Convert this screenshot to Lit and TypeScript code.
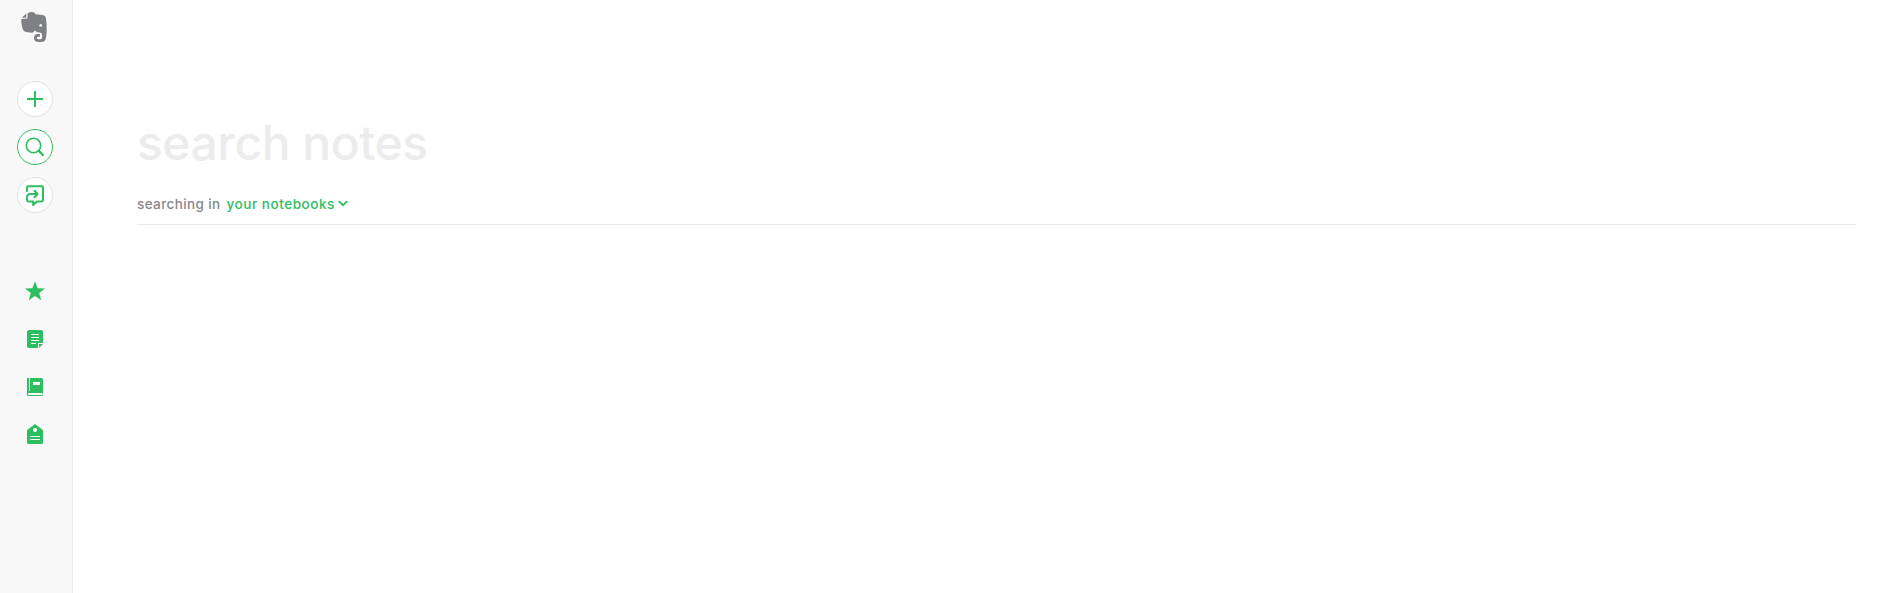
import { LitElement, html, css, svg } from "lit";
import { customElement } from "lit/decorators.js";

const plus = svg`<path d="M18 10v16M10 18h16" fill="none" stroke="#2dbe60" stroke-width="2"/>`;
const magnifier = svg`<circle cx="16.5" cy="16.5" r="7.2" fill="none" stroke="#2dbe60" stroke-width="1.6"/><path d="M21.5 21.5L26.6 26.6" fill="none" stroke="#2dbe60" stroke-width="2.2"/>`;
const share = svg`<g fill="none" stroke="#2dbe60" stroke-width="2" stroke-linejoin="round"><path d="M10 14.8V10.6Q10 9.2 11.4 9.2H24.6Q26 9.2 26 10.6V23.1Q26 24.5 24.6 24.5H19.9L16.2 28V24.5H11.4Q10 24.5 10 23.1V20.5Q10 17 13.5 17H19.5"/><path d="M17 13.2L20.6 17L17 20.8"/></g>`;
const star = svg`<path d="M18 8.2L20.6 15.2L28 15.5L22.2 20.1L24.2 27.2L18 23.1L11.8 27.2L13.8 20.1L8 15.5L15.4 15.2Z" fill="#2dbe60"/>`;
const note = svg`<path d="M12 9H24Q26 9 26 11V22H21V27H12Q10 27 10 25V11Q10 9 12 9Z" fill="#2dbe60"/><path d="M22 23H26L22 27Z" fill="#2dbe60"/><path d="M14 13.5H22M14 16.5H22M14 19.5H22M14 22.5H19" stroke="#fff" stroke-width="1"/>`;
const book = svg`<path d="M10 9H24.5Q26 9 26 10.5V25.5Q26 27 24.5 27H11.5Q10 27 10 25.5Z" fill="#2dbe60"/><path d="M12 9H13V22H12ZM16 13H23V16H16ZM11.5 24H25.5V26H11.5Q10.9 25.6 10.9 25T11.5 24Z" fill="#fff"/>`;
const tag = svg`<path d="M18 7L25.2 12.4Q26 13.1 26 14V25.6Q26 27 24.6 27H11.4Q10 27 10 25.6V14Q10 13.1 10.8 12.4Z" fill="#2dbe60"/><circle cx="18" cy="13" r="2" fill="#fff"/><path d="M13 19.5H23M13 22.5H23" stroke="#fff" stroke-width="1"/>`;

@customElement("app-root")
export class AppRoot extends LitElement {
  static styles = css`
    :host {
      display: flex;
      height: 100vh;
      overflow: hidden;
      background: #fff;
      font-family: Inter, "Liberation Sans", sans-serif;
    }
    svg { display: block; }
    .sidebar {
      box-sizing: border-box;
      flex: none;
      width: 73px;
      padding: 10px 0 0 17px;
      background: #f8f8f8;
      border-right: 1px solid #ececec;
    }
    .logo { margin-bottom: 37px; }
    .actions, .links { display: flex; flex-direction: column; gap: 12px; }
    .links { margin-top: 60px; }
    .item { box-sizing: border-box; width: 36px; height: 36px; }
    .main { flex: 1; padding: 114px 37px 0 64px; }
    .title {
      height: 58px;
      line-height: 58px;
      font-size: 48px;
      font-weight: 500;
      letter-spacing: -0.5px;
      color: #ececec;
      white-space: nowrap;
    }
    .scope {
      display: flex;
      align-items: center;
      height: 20px;
      margin-top: 22px;
      padding-bottom: 10px;
      border-bottom: 1px solid #e8e8e8;
      font-size: 13.5px;
      line-height: 20px;
      font-weight: 500;
      letter-spacing: 0.38px;
      white-space: nowrap;
    }
    .label { width: 89.5px; color: #878787; }
    .choice { width: 111px; color: #2dbe60; letter-spacing: 0.54px; }
  `;

  private round(icon: unknown, active = false) {
    return html`<div class="item"><svg width="36" height="36" viewBox="0 0 36 36">
      <circle cx="18" cy="18" r="17.5" fill="#fff" stroke=${active ? "#2dbe60" : "#e0e0e0"}></circle>${icon}</svg></div>`;
  }

  private plain(icon: unknown) {
    return html`<div class="item"><svg width="36" height="36" viewBox="0 0 36 36">${icon}</svg></div>`;
  }

  render() {
    return html`
      <nav class="sidebar">
        <svg class="logo" width="36" height="34" viewBox="0 0 36 34">
          <path fill="#7f8084" d="M10.5 4Q11 2 14.5 2Q17.8 2 18.6 4.2L25.5 5Q28.4 5.3 28.8 7.8Q29.8 13 29.7 19Q29.7 26 28.4 29.5Q27.6 32 24 32H21.5Q17 32 17 28Q17 24 21 24H23V26.8H21.2Q19.8 26.8 19.8 28Q19.8 29.3 21.5 29.3H23.3Q25.2 29.3 25.2 26.5Q25.2 22.6 22.5 22.6Q18.9 22.6 17.8 20.2Q17 22.9 14.5 22.8L9 22Q6.3 21.5 5.5 18.5Q4.2 13.7 4.2 10.2Q4.2 8.9 5.6 8.8H9Q10.5 8.8 10.5 7.3Z"/>
          <path fill="#7f8084" d="M9.3 3.4V7Q9.3 7.7 8.6 7.7H5Z"/>
          <path fill="#fff" d="M22.1 16.4Q22.3 14 23.8 14.1Q25.2 14.4 25.1 16.7Q23.5 16 22.1 16.4Z"/>
        </svg>
        <div class="actions">${this.round(plus)}${this.round(magnifier, true)}${this.round(share)}</div>
        <div class="links">${this.plain(star)}${this.plain(note)}${this.plain(book)}${this.plain(tag)}</div>
      </nav>
      <main class="main">
        <div class="title">search notes</div>
        <div class="scope">
          <span class="label">searching in</span>
          <span class="choice">your notebooks</span>
          <svg width="10" height="8" viewBox="0 0 10 8"><path d="M0.7 1.2L5 5.2L9.3 1.2" fill="none" stroke="#2dbe60" stroke-width="1.8"/></svg>
        </div>
      </main>`;
  }
}
